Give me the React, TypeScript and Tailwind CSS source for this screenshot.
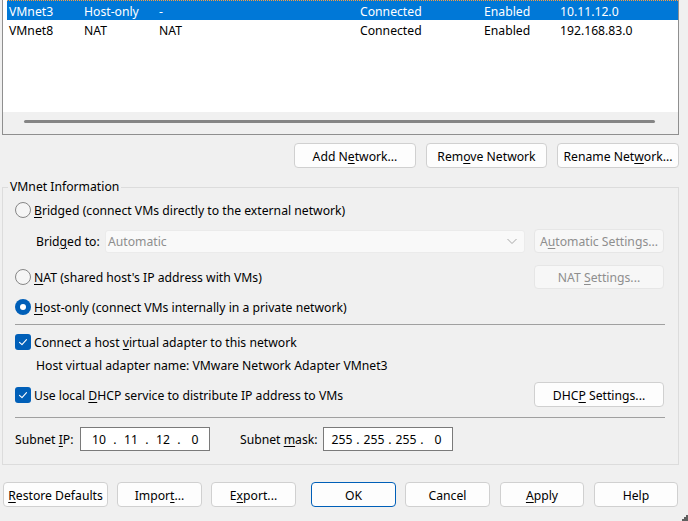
import React from "react";

const U = ({ c }: { c: string }) => <span className="underline underline-offset-[2px] decoration-[1px]">{c}</span>;

type BtnProps = { children: React.ReactNode; className?: string; disabled?: boolean; primary?: boolean };
function Btn({ children, className = "", disabled, primary }: BtnProps) {
  const tone = disabled
    ? "bg-[#f7f7f7] border-[#e6e6e6] text-[#8e8e8e]"
    : primary
    ? "bg-[#fdfdfd] border-[#005fb8] text-black"
    : "bg-[#fdfdfd] border-[#d0d0d0] text-black";
  return (
    <div className={`flex shrink-0 items-center justify-center rounded-[4px] border ${tone} ${className}`}>
      <span className="whitespace-nowrap pt-[2px]">{children}</span>
    </div>
  );
}

function Radio({ checked }: { checked?: boolean }) {
  if (checked)
    return (
      <div className="flex h-[16px] w-[16px] shrink-0 items-center justify-center rounded-full bg-[#005fb8]">
        <div className="h-[6px] w-[6px] rounded-full bg-white" />
      </div>
    );
  return <div className="h-[16px] w-[16px] shrink-0 rounded-full border border-[#868686] bg-[#f5f5f5]" />;
}

function Check() {
  return (
    <div className="flex h-[16px] w-[16px] shrink-0 items-center justify-center rounded-[3px] bg-[#005fb8]">
      <svg width="16" height="16" viewBox="0 0 16 16">
        <polyline points="4.5,8.3 7,10.6 11.5,5.6" fill="none" stroke="white" strokeWidth="1.1" strokeLinecap="round" strokeLinejoin="round" />
      </svg>
    </div>
  );
}

function IpBox({ parts }: { parts: string[] }) {
  return (
    <div className="flex h-[24px] w-[130px] shrink-0 items-center border border-[#7a7a7a] bg-white pl-[6px]">
      {parts.map((p, i) => (
        <React.Fragment key={i}>
          {i > 0 && <span className="w-[8px] pt-[2px] text-center">.</span>}
          <span className="w-[24px] pt-[2px] text-center">{p}</span>
        </React.Fragment>
      ))}
    </div>
  );
}

const rows = [
  { cells: ["VMnet3", "Host-only", "-", "Connected", "Enabled", "10.11.12.0"], sel: true },
  { cells: ["VMnet8", "NAT", "NAT", "Connected", "Enabled", "192.168.83.0"], sel: false },
];
const colW = ["w-[75px]", "w-[75px]", "w-[201px]", "w-[124px]", "w-[76px]", "w-[110px]"];

export default function App() {
  return (
    <div className="relative h-[521px] w-[688px] overflow-hidden bg-[#f0f0f0] font-['Noto_Sans',sans-serif] text-[12.2px] leading-[16px] text-black">
      {/* list */}
      <div className="ml-[2px] flex h-[135px] w-[677px] flex-col border-x border-b border-[#8f8f8f] bg-white">
        <div className="flex flex-col pl-[4px]">
          {rows.map((r, i) => (
            <div
              key={i}
              className={
                r.sel
                  ? "flex h-[20px] items-center border-t border-dotted border-[#ff9d3b] bg-[#0078d7] pl-[2px] text-white"
                  : "flex h-[20px] items-center pl-[2px] text-black"
              }
            >
              {r.cells.map((c, j) => (
                <span key={j} className={`${colW[j]} shrink-0 whitespace-nowrap pt-[2px]`}>
                  {c}
                </span>
              ))}
            </div>
          ))}
        </div>
        <div className="mt-auto h-[22px] bg-[#f0f0f0] pt-[8px]">
          <div className="ml-[21px] h-[3px] w-[631px] rounded-full bg-[#858585]" />
        </div>
      </div>

      {/* network buttons */}
      <div className="ml-[2px] mt-[8px] flex w-[677px] justify-end gap-[10px]">
        <Btn className="h-[25px] w-[122px]">
          Add N<U c="e" />twork...
        </Btn>
        <Btn className="h-[25px] w-[121px]">
          Rem<U c="o" />ve Network
        </Btn>
        <Btn className="h-[25px] w-[122px]">
          Rename Net<U c="w" />ork...
        </Btn>
      </div>

      {/* group box */}
      <div className="relative ml-[2px] mt-[19px] flex w-[677px] flex-col border border-[#dcdcdc] pb-[13px] pl-[12px] pr-[14px] pt-[12px]">
        <div className="absolute left-[5px] top-[-9px] bg-[#f0f0f0] px-[2px]">VMnet Information</div>

        <div className="flex h-[20px] items-center">
          <Radio />
          <span className="ml-[3px] pt-[2px]">
            <U c="B" />ridged (connect VMs directly to the external network)
          </span>
        </div>

        <div className="mt-[9px] flex h-[24px] items-center">
          <span className="w-[90px] shrink-0 pl-[21px] pt-[2px]">
            Brid<U c="g" />ed to:
          </span>
          <div className="flex h-[23px] w-[420px] items-center justify-between rounded-[3px] border border-[#ebebeb] bg-[#f9f9f9] pl-[2px] pr-[6px] text-[#8e8e8e]">
            <span className="pt-[2px]">Automatic</span>
            <svg width="12" height="8" viewBox="0 0 12 8">
              <polyline points="1.5,2 6,6.5 10.5,2" fill="none" stroke="#a8a8a8" strokeWidth="1" />
            </svg>
          </div>
          <Btn disabled className="ml-auto h-[24px] w-[130px]">
            A<U c="u" />tomatic Settings...
          </Btn>
        </div>

        <div className="mt-[12px] flex h-[24px] items-center">
          <Radio />
          <span className="ml-[3px] pt-[2px]">
            <U c="N" />AT (shared host's IP address with VMs)
          </span>
          <Btn disabled className="ml-auto h-[24px] w-[130px]">
            NAT <U c="S" />ettings...
          </Btn>
        </div>

        <div className="mt-[8px] flex h-[20px] items-center">
          <Radio checked />
          <span className="ml-[3px] pt-[2px]">
            <U c="H" />ost-only (connect VMs internally in a private network)
          </span>
        </div>

        <div className="mt-[7px] h-px w-[650px] bg-[#a0a0a0]" />

        <div className="mt-[7px] flex h-[20px] items-center">
          <Check />
          <span className="ml-[3px] pt-[2px]">
            Connect a host <U c="v" />irtual adapter to this network
          </span>
        </div>

        <div className="mt-[3px] flex h-[20px] items-center pl-[21px]">
          <span className="pt-[2px]">Host virtual adapter name: VMware Network Adapter VMnet3</span>
        </div>

        <div className="mt-[7px] flex h-[25px] items-center">
          <Check />
          <span className="ml-[3px] pt-[2px]">
            Use local <U c="D" />HCP service to distribute IP address to VMs
          </span>
          <Btn className="ml-auto h-[25px] w-[130px]">
            DHC<U c="P" /> Settings...
          </Btn>
        </div>

        <div className="mt-[10px] h-px w-[650px] bg-[#a0a0a0]" />

        <div className="mt-[9px] flex h-[24px] items-center">
          <span className="w-[65px] shrink-0 pt-[2px]">
            Subnet <U c="I" />P:
          </span>
          <IpBox parts={["10", "11", "12", "0"]} />
          <span className="ml-[30px] w-[83px] shrink-0 pt-[2px]">
            Subnet <U c="m" />ask:
          </span>
          <IpBox parts={["255", "255", "255", "0"]} />
        </div>
      </div>

      {/* bottom buttons */}
      <div className="mt-[17px] flex">
        <Btn className="ml-[3px] h-[25px] w-[105px]">
          <U c="R" />estore Defaults
        </Btn>
        <Btn className="ml-[9px] h-[25px] w-[85px]">
          Impor<U c="t" />...
        </Btn>
        <Btn className="ml-[9px] h-[25px] w-[85px]">
          E<U c="x" />port...
        </Btn>
        <Btn primary className="ml-[15px] h-[25px] w-[85px]">
          OK
        </Btn>
        <Btn className="ml-[9px] h-[25px] w-[85px]">Cancel</Btn>
        <Btn className="ml-[10px] h-[25px] w-[84px]">
          <U c="A" />pply
        </Btn>
        <Btn className="ml-[10px] h-[25px] w-[84px]">Help</Btn>
      </div>

      {/* resize grip */}
      <svg className="absolute bottom-0 right-0" width="8" height="8" viewBox="0 0 8 8">
        <rect x="6" y="2" width="2" height="2" fill="#5f5f5f" />
        <rect x="4" y="4" width="2" height="2" fill="#5f5f5f" />
        <rect x="6" y="4" width="2" height="2" fill="#5f5f5f" />
        <rect x="2" y="6" width="2" height="2" fill="#5f5f5f" />
        <rect x="4" y="6" width="2" height="2" fill="#5f5f5f" />
        <rect x="6" y="6" width="2" height="2" fill="#5f5f5f" />
      </svg>
    </div>
  );
}
